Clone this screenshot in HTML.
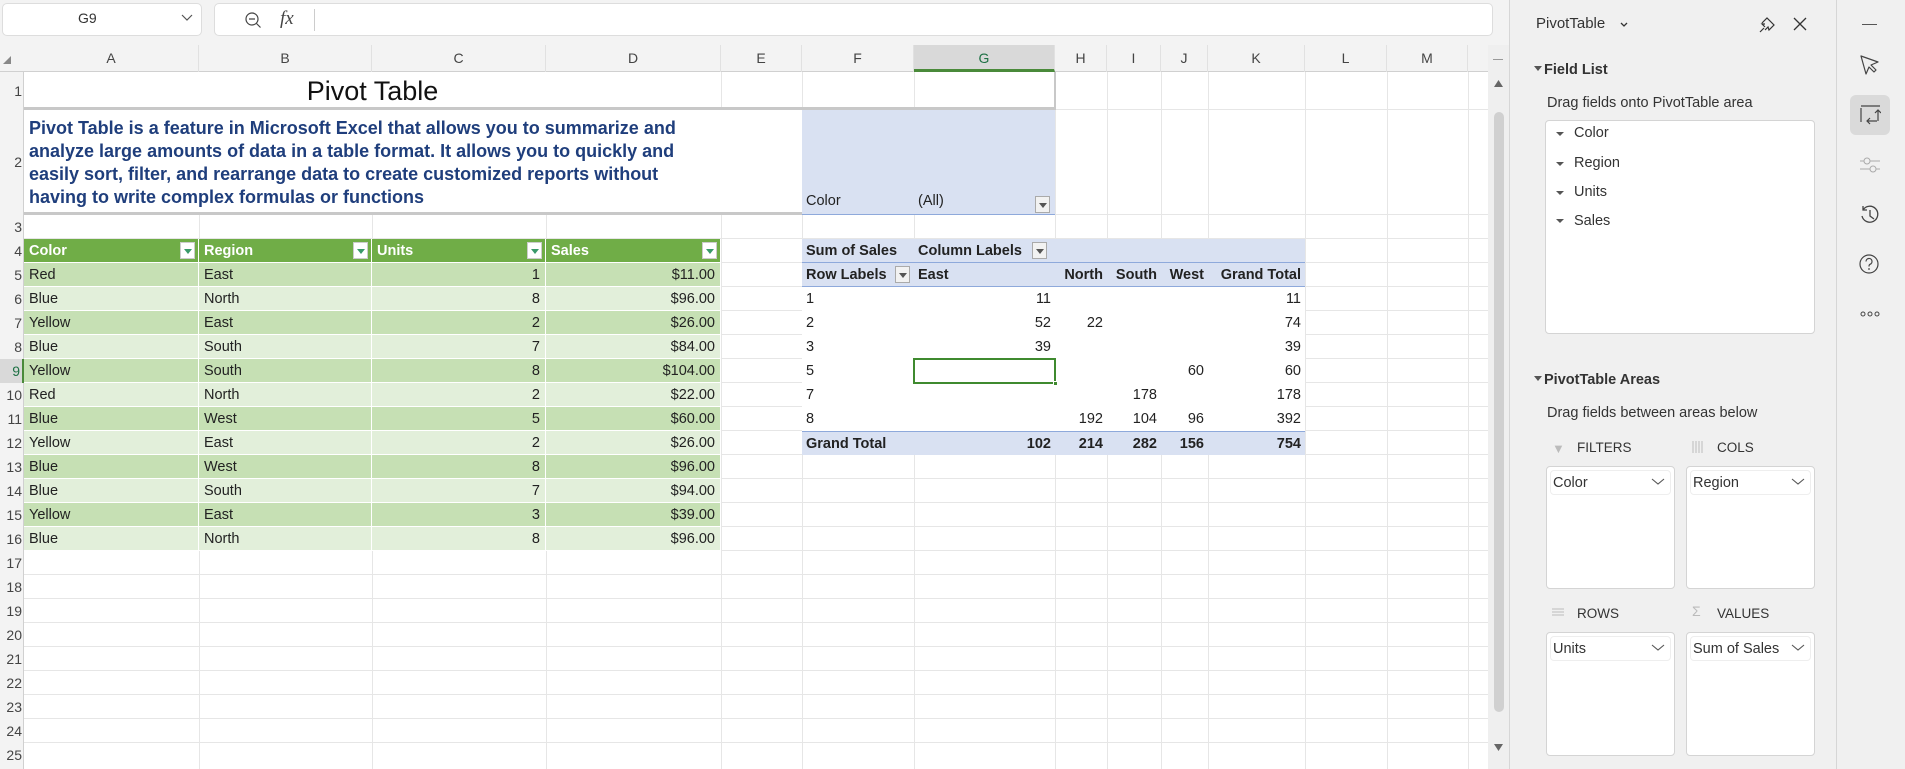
<!DOCTYPE html>
<html><head><meta charset="utf-8"><style>
*{box-sizing:border-box;margin:0;padding:0}
body{width:1905px;height:769px;overflow:hidden;background:#f3f3f3;position:relative;font-family:"Liberation Sans",sans-serif;color:#222}
.a{position:absolute}
.n{font-family:"Liberation Sans Narrow","Liberation Sans",sans-serif;font-size:14.5px}
.vl{position:absolute;top:72px;width:1px;height:697px;background:#e6e6e6}
.hl{position:absolute;left:24px;width:1464px;height:1px;background:#e6e6e6}
.ch{position:absolute;top:45px;height:27px;line-height:27px;text-align:center;font-size:14px;color:#444;border-right:1px solid #e1e1e1}
.rh{position:absolute;left:0;width:22px;height:24px;line-height:24px;text-align:right;font-size:14px;color:#444}
.tr{position:absolute;left:24px;display:flex;height:24px}
.tr div{height:24px;line-height:24px;padding:0 5px;border-right:1px solid #fff;border-bottom:1px solid #fff;white-space:nowrap;position:relative}
.r{text-align:right}
.dk{background:#c6e0b4}.lt{background:#e2efda}
.hd div{background:#70ad47;color:#fff;font-weight:bold}
.dd{position:absolute;right:3px;top:3px;width:15px;height:17px;background:#fff;border:1px solid #ccc}
.dd:after{content:"";position:absolute;left:3px;top:6px;border-left:4px solid transparent;border-right:4px solid transparent;border-top:5px solid #3a9a6a}
.gd:after{border-top-color:#555}
.pr{position:absolute;left:802px;display:flex;height:24px}
.pr div{height:24px;line-height:24px;padding:0 4px;white-space:nowrap;position:relative}
.b{font-weight:bold}
.pan{font-size:14.5px;color:#333}
</style></head><body>
<div class="a" style="left:2px;top:3px;width:200px;height:33px;background:#fff;border:1px solid #ddd;border-radius:5px"></div>
<div class="a" style="left:78px;top:10px;font-size:14px;color:#333">G9</div>
<svg class="a" style="left:181px;top:13px" width="12" height="10"><path d="M1 2l5 5 5-5" fill="none" stroke="#555" stroke-width="1.2"/></svg>
<div class="a" style="left:214px;top:3px;width:1279px;height:33px;background:#fff;border:1px solid #ddd;border-radius:5px"></div>
<svg class="a" style="left:244px;top:11px" width="18" height="18"><circle cx="8" cy="8" r="6" fill="none" stroke="#444" stroke-width="1.2"/><path d="M5 8h6M12.5 12.5l4 4" stroke="#444" stroke-width="1.2"/></svg>
<div class="a" style="left:280px;top:8px;font-family:'Liberation Serif',serif;font-style:italic;font-size:19px;color:#444">fx</div>
<div class="a" style="left:314px;top:9px;width:1px;height:22px;background:#ccc"></div>
<div class="a" style="left:24px;top:72px;width:1464px;height:697px;background:#fff"></div>
<div class="a" style="left:0;top:45px;width:1488px;height:27px;background:#f3f3f3;border-bottom:1px solid #d0d0d0"></div>
<div class="a" style="left:0;top:72px;width:24px;height:697px;background:#f3f3f3;border-right:1px solid #d0d0d0"></div>
<svg class="a" style="left:3px;top:56px" width="8" height="8"><path d="M8 0V8H0Z" fill="#888"/></svg>
<div class="ch" style="left:24px;width:175px">A</div>
<div class="ch" style="left:199px;width:173px">B</div>
<div class="ch" style="left:372px;width:174px">C</div>
<div class="ch" style="left:546px;width:175px">D</div>
<div class="ch" style="left:721px;width:81px">E</div>
<div class="ch" style="left:802px;width:112px">F</div>
<div class="ch" style="left:914px;width:141px;background:#d9d9d9;color:#1e7145;border-bottom:3px solid #4a8a3a">G</div>
<div class="ch" style="left:1055px;width:52px">H</div>
<div class="ch" style="left:1107px;width:54px">I</div>
<div class="ch" style="left:1161px;width:47px">J</div>
<div class="ch" style="left:1208px;width:97px">K</div>
<div class="ch" style="left:1305px;width:82px">L</div>
<div class="ch" style="left:1387px;width:81px">M</div>
<div class="vl" style="left:199px"></div><div class="vl" style="left:372px"></div><div class="vl" style="left:546px"></div><div class="vl" style="left:721px"></div><div class="vl" style="left:802px"></div><div class="vl" style="left:914px"></div><div class="vl" style="left:1055px"></div><div class="vl" style="left:1107px"></div><div class="vl" style="left:1161px"></div><div class="vl" style="left:1208px"></div><div class="vl" style="left:1305px"></div><div class="vl" style="left:1387px"></div><div class="vl" style="left:1468px"></div>
<div class="hl" style="top:109px"></div><div class="hl" style="top:214px"></div><div class="hl" style="top:238px"></div>
<div class="hl" style="top:262px"></div><div class="hl" style="top:286px"></div><div class="hl" style="top:310px"></div><div class="hl" style="top:334px"></div><div class="hl" style="top:358px"></div><div class="hl" style="top:382px"></div><div class="hl" style="top:406px"></div><div class="hl" style="top:430px"></div><div class="hl" style="top:454px"></div><div class="hl" style="top:478px"></div><div class="hl" style="top:502px"></div><div class="hl" style="top:526px"></div><div class="hl" style="top:550px"></div><div class="hl" style="top:574px"></div><div class="hl" style="top:598px"></div><div class="hl" style="top:622px"></div><div class="hl" style="top:646px"></div><div class="hl" style="top:670px"></div><div class="hl" style="top:694px"></div><div class="hl" style="top:718px"></div><div class="hl" style="top:742px"></div>
<div class="a" style="left:24px;top:72px;width:697px;height:38px;background:#fff;border-bottom:3px solid #c8c8c8;text-align:center;font-size:27px;line-height:38px;color:#111">Pivot Table</div>
<div class="a" style="left:721px;top:72px;width:334px;height:38px;border-bottom:3px solid #c8c8c8"></div>
<div class="a" style="left:914px;top:72px;width:142px;height:38px;border-right:2px solid #c8c8c8"></div>
<div class="a" style="left:24px;top:110px;width:778px;height:105px;background:#fff;border-bottom:3px solid #c8c8c8;padding:7px 5px;font-size:18px;font-weight:bold;line-height:23px;color:#1f3e7c;white-space:nowrap">Pivot Table is a feature in Microsoft Excel that allows you to summarize and<br>analyze large amounts of data in a table format. It allows you to quickly and<br>easily sort, filter, and rearrange data to create customized reports without<br>having to write complex formulas or functions</div>
<div class="a" style="left:802px;top:110px;width:253px;height:105px;background:#d9e1f2;border-bottom:1px solid #8ea9db"></div>
<div class="a n" style="left:806px;top:193px">Color</div>
<div class="a n" style="left:918px;top:193px">(All)</div>
<div class="dd gd" style="left:1035px;top:196px;right:auto;width:15px;height:17px;background:#f2f2f2;border-color:#aaa"></div>
<div class="rh" style="top:79px">1</div><div class="rh" style="top:150px">2</div><div class="rh" style="top:215px">3</div>
<div class="rh" style="top:239px">4</div><div class="rh" style="top:263px">5</div><div class="rh" style="top:287px">6</div><div class="rh" style="top:311px">7</div><div class="rh" style="top:335px">8</div><div class="rh" style="top:359px;background:#d9d9d9;color:#1e7145;width:24px;border-right:2px solid #4a8a3a;padding-right:2px">9</div><div class="rh" style="top:383px">10</div><div class="rh" style="top:407px">11</div><div class="rh" style="top:431px">12</div><div class="rh" style="top:455px">13</div><div class="rh" style="top:479px">14</div><div class="rh" style="top:503px">15</div><div class="rh" style="top:527px">16</div><div class="rh" style="top:551px">17</div><div class="rh" style="top:575px">18</div><div class="rh" style="top:599px">19</div><div class="rh" style="top:623px">20</div><div class="rh" style="top:647px">21</div><div class="rh" style="top:671px">22</div><div class="rh" style="top:695px">23</div><div class="rh" style="top:719px">24</div><div class="rh" style="top:743px">25</div>
<div class="tr hd n" style="top:239px"><div style="width:175px">Color<span class="dd"></span></div><div style="width:173px">Region<span class="dd"></span></div><div style="width:174px">Units<span class="dd"></span></div><div style="width:175px">Sales<span class="dd"></span></div></div>
<div class="tr n dk" style="top:263px"><div style="width:175px">Red</div><div style="width:173px">East</div><div class="r" style="width:174px">1</div><div class="r" style="width:175px">$11.00</div></div>
<div class="tr n lt" style="top:287px"><div style="width:175px">Blue</div><div style="width:173px">North</div><div class="r" style="width:174px">8</div><div class="r" style="width:175px">$96.00</div></div>
<div class="tr n dk" style="top:311px"><div style="width:175px">Yellow</div><div style="width:173px">East</div><div class="r" style="width:174px">2</div><div class="r" style="width:175px">$26.00</div></div>
<div class="tr n lt" style="top:335px"><div style="width:175px">Blue</div><div style="width:173px">South</div><div class="r" style="width:174px">7</div><div class="r" style="width:175px">$84.00</div></div>
<div class="tr n dk" style="top:359px"><div style="width:175px">Yellow</div><div style="width:173px">South</div><div class="r" style="width:174px">8</div><div class="r" style="width:175px">$104.00</div></div>
<div class="tr n lt" style="top:383px"><div style="width:175px">Red</div><div style="width:173px">North</div><div class="r" style="width:174px">2</div><div class="r" style="width:175px">$22.00</div></div>
<div class="tr n dk" style="top:407px"><div style="width:175px">Blue</div><div style="width:173px">West</div><div class="r" style="width:174px">5</div><div class="r" style="width:175px">$60.00</div></div>
<div class="tr n lt" style="top:431px"><div style="width:175px">Yellow</div><div style="width:173px">East</div><div class="r" style="width:174px">2</div><div class="r" style="width:175px">$26.00</div></div>
<div class="tr n dk" style="top:455px"><div style="width:175px">Blue</div><div style="width:173px">West</div><div class="r" style="width:174px">8</div><div class="r" style="width:175px">$96.00</div></div>
<div class="tr n lt" style="top:479px"><div style="width:175px">Blue</div><div style="width:173px">South</div><div class="r" style="width:174px">7</div><div class="r" style="width:175px">$94.00</div></div>
<div class="tr n dk" style="top:503px"><div style="width:175px">Yellow</div><div style="width:173px">East</div><div class="r" style="width:174px">3</div><div class="r" style="width:175px">$39.00</div></div>
<div class="tr n lt" style="top:527px"><div style="width:175px">Blue</div><div style="width:173px">North</div><div class="r" style="width:174px">8</div><div class="r" style="width:175px">$96.00</div></div>
<div class="pr n b" style="top:239px;background:#d9e1f2;width:503px;border-bottom:1px solid #8ea9db"><div style="width:112px">Sum of Sales</div><div style="width:141px">Column Labels<span class="dd gd" style="right:auto;left:118px;background:#f2f2f2;border-color:#aaa"></span></div></div>
<div class="pr n b" style="top:263px;background:#d9e1f2;width:503px;border-bottom:1px solid #8ea9db"><div style="width:112px">Row Labels<span class="dd gd" style="right:4px;background:#f2f2f2;border-color:#aaa"></span></div><div style="width:141px">East</div><div class="r" style="width:52px">North</div><div class="r" style="width:54px">South</div><div class="r" style="width:47px">West</div><div class="r" style="width:97px">Grand Total</div></div>
<div class="pr n" style="top:287px;background:#fff;width:503px"><div style="width:112px">1</div><div class="r" style="width:141px">11</div><div style="width:52px"></div><div style="width:54px"></div><div style="width:47px"></div><div class="r" style="width:97px">11</div></div>
<div class="pr n" style="top:311px;background:#fff;width:503px"><div style="width:112px">2</div><div class="r" style="width:141px">52</div><div class="r" style="width:52px">22</div><div style="width:54px"></div><div style="width:47px"></div><div class="r" style="width:97px">74</div></div>
<div class="pr n" style="top:335px;background:#fff;width:503px"><div style="width:112px">3</div><div class="r" style="width:141px">39</div><div style="width:52px"></div><div style="width:54px"></div><div style="width:47px"></div><div class="r" style="width:97px">39</div></div>
<div class="pr n" style="top:359px;background:#fff;width:503px"><div style="width:112px">5</div><div style="width:141px"></div><div style="width:52px"></div><div style="width:54px"></div><div class="r" style="width:47px">60</div><div class="r" style="width:97px">60</div></div>
<div class="pr n" style="top:383px;background:#fff;width:503px"><div style="width:112px">7</div><div style="width:141px"></div><div style="width:52px"></div><div class="r" style="width:54px">178</div><div style="width:47px"></div><div class="r" style="width:97px">178</div></div>
<div class="pr n" style="top:407px;background:#fff;width:503px"><div style="width:112px">8</div><div style="width:141px"></div><div class="r" style="width:52px">192</div><div class="r" style="width:54px">104</div><div class="r" style="width:47px">96</div><div class="r" style="width:97px">392</div></div>
<div class="pr n b" style="top:431px;background:#d9e1f2;width:503px;border-top:1px solid #8ea9db"><div style="width:112px">Grand Total</div><div class="r" style="width:141px">102</div><div class="r" style="width:52px">214</div><div class="r" style="width:54px">282</div><div class="r" style="width:47px">156</div><div class="r" style="width:97px">754</div></div>
<div class="a" style="left:913px;top:358px;width:143px;height:26px;border:2px solid #3f8a2f"></div>
<div class="a" style="left:1053px;top:381px;width:5px;height:5px;background:#3f8a2f;border:1px solid #fff"></div>
<div class="a" style="left:1488px;top:45px;width:21px;height:724px;background:#efefef"></div>
<div class="a" style="left:1493px;top:59px;width:10px;height:1px;background:#999"></div>
<svg class="a" style="left:1494px;top:80px" width="9" height="7"><path d="M0 7L4.5 0 9 7Z" fill="#666"/></svg>
<div class="a" style="left:1494px;top:112px;width:10px;height:600px;background:#d0d0d0;border-radius:5px"></div>
<svg class="a" style="left:1494px;top:744px" width="9" height="7"><path d="M0 0L4.5 7 9 0Z" fill="#666"/></svg>
<div class="a" style="left:1509px;top:0;width:327px;height:769px;background:#f0f0f0;border-left:1px solid #d6d6d6"></div>
<div class="a" style="left:1836px;top:0;width:69px;height:769px;background:#f0f0f0;border-left:1px solid #d6d6d6"></div>
<div class="a pan" style="left:1536px;top:15px;font-size:15px">PivotTable</div>
<svg class="a" style="left:1620px;top:22px" width="8" height="6"><path d="M1 1l3 3 3-3" fill="none" stroke="#333" stroke-width="1.3"/></svg>
<svg class="a" style="left:1758px;top:16px" width="18" height="18"><path d="M4 7l5-5 7 7-5 5-1-3-3 3M7 8l-3 0 3 3" fill="none" stroke="#333" stroke-width="1.2"/><path d="M6 12l-4 4" stroke="#333" stroke-width="1.2"/></svg>
<svg class="a" style="left:1793px;top:17px" width="14" height="14"><path d="M1 1l12 12M13 1L1 13" stroke="#333" stroke-width="1.3"/></svg>
<svg class="a" style="left:1534px;top:66px" width="8" height="6"><path d="M0 0h8L4 5Z" fill="#555"/></svg>
<div class="a pan b" style="left:1544px;top:62px">Field List</div>
<div class="a pan" style="left:1547px;top:95px">Drag fields onto PivotTable area</div>
<div class="a" style="left:1545px;top:120px;width:270px;height:214px;background:#fff;border:1px solid #d4d4d4;border-radius:4px"></div>
<svg class="a" style="left:1555px;top:131px" width="10" height="70"><path d="M1 1h8L5 5ZM1 31h8L5 35ZM1 60h8L5 64Z" fill="#555"/></svg>
<svg class="a" style="left:1555px;top:218px" width="10" height="6"><path d="M1 1h8L5 5Z" fill="#555"/></svg>
<div class="a pan" style="left:1574px;top:125px">Color</div>
<div class="a pan" style="left:1574px;top:155px">Region</div>
<div class="a pan" style="left:1574px;top:184px">Units</div>
<div class="a pan" style="left:1574px;top:213px">Sales</div>
<svg class="a" style="left:1534px;top:376px" width="8" height="6"><path d="M0 0h8L4 5Z" fill="#555"/></svg>
<div class="a pan b" style="left:1544px;top:372px">PivotTable Areas</div>
<div class="a pan" style="left:1547px;top:405px">Drag fields between areas below</div>
<div class="a" style="left:1552px;top:441px;width:12px;height:14px;color:#bbb;font-size:13px">&#x25BC;</div>
<div class="a pan" style="left:1577px;top:440px;font-size:13.5px">FILTERS</div>
<svg class="a" style="left:1692px;top:441px" width="12" height="12"><path d="M1 0v12M4 0v12M7 0v12M10 0v12" stroke="#bbb"/></svg>
<div class="a pan" style="left:1717px;top:440px;font-size:13.5px">COLS</div>
<svg class="a" style="left:1552px;top:608px" width="12" height="10"><path d="M0 1h12M0 4h12M0 7h12" stroke="#bbb"/></svg>
<div class="a pan" style="left:1577px;top:606px;font-size:13.5px">ROWS</div>
<div class="a" style="left:1692px;top:603px;color:#bbb;font-size:14px">Σ</div>
<div class="a pan" style="left:1717px;top:606px;font-size:13.5px">VALUES</div>
<div class="a" style="left:1546px;top:466px;width:129px;height:123px;background:#fff;border:1px solid #d4d4d4;border-radius:4px"></div>
<div class="a" style="left:1686px;top:466px;width:129px;height:123px;background:#fff;border:1px solid #d4d4d4;border-radius:4px"></div>
<div class="a" style="left:1546px;top:632px;width:129px;height:124px;background:#fff;border:1px solid #d4d4d4;border-radius:4px"></div>
<div class="a" style="left:1686px;top:632px;width:129px;height:124px;background:#fff;border:1px solid #d4d4d4;border-radius:4px"></div>
<div class="a pan" style="left:1550px;top:470px;width:121px;height:25px;border:1px solid #eee;border-radius:4px;padding:4px 2px">Color</div>
<div class="a pan" style="left:1690px;top:470px;width:121px;height:25px;border:1px solid #eee;border-radius:4px;padding:4px 2px">Region</div>
<div class="a pan" style="left:1550px;top:636px;width:121px;height:25px;border:1px solid #eee;border-radius:4px;padding:4px 2px">Units</div>
<div class="a pan" style="left:1690px;top:636px;width:121px;height:25px;border:1px solid #eee;border-radius:4px;padding:4px 2px">Sum of Sales</div>
<svg class="a" style="left:1651px;top:478px" width="14" height="8"><path d="M1 1l6 5 6-5" fill="none" stroke="#555" stroke-width="1.1"/></svg>
<svg class="a" style="left:1791px;top:478px" width="14" height="8"><path d="M1 1l6 5 6-5" fill="none" stroke="#555" stroke-width="1.1"/></svg>
<svg class="a" style="left:1651px;top:644px" width="14" height="8"><path d="M1 1l6 5 6-5" fill="none" stroke="#555" stroke-width="1.1"/></svg>
<svg class="a" style="left:1791px;top:644px" width="14" height="8"><path d="M1 1l6 5 6-5" fill="none" stroke="#555" stroke-width="1.1"/></svg>
<div class="a" style="left:1862px;top:24px;width:15px;height:1px;background:#555"></div>
<svg class="a" style="left:1860px;top:55px" width="20" height="20"><path d="M1 1l17 6-7 3 5 5-2 2-5-5-3 7Z" fill="none" stroke="#444" stroke-width="1.2" stroke-linejoin="round"/></svg>
<div class="a" style="left:1850px;top:95px;width:40px;height:40px;background:#dadada;border-radius:6px"></div>
<svg class="a" style="left:1860px;top:104px" width="21" height="21"><path d="M1 2h19M1 4v14M18 17V6M15 9l3-3 3 3M17 17H7M10 14l-3 3 3 3" fill="none" stroke="#444" stroke-width="1.2"/></svg>
<svg class="a" style="left:1859px;top:155px" width="22" height="20"><path d="M1 6h20M1 14h20" stroke="#aaa"/><circle cx="8" cy="6" r="3" fill="#f0f0f0" stroke="#aaa"/><circle cx="14" cy="14" r="3" fill="#f0f0f0" stroke="#aaa"/></svg>
<svg class="a" style="left:1859px;top:204px" width="22" height="22"><path d="M4 6A8 8 0 1 1 3 12M4 2v4h4M11 6v6l4 3" fill="none" stroke="#444" stroke-width="1.3"/></svg>
<svg class="a" style="left:1858px;top:253px" width="22" height="22"><circle cx="11" cy="11" r="9" fill="none" stroke="#444" stroke-width="1.2"/><path d="M8 8.5a3 3 0 1 1 4 2.8c-1 .4-1 1-1 2.2" fill="none" stroke="#444" stroke-width="1.2"/><circle cx="11" cy="16" r=".9" fill="#444"/></svg>
<svg class="a" style="left:1860px;top:311px" width="20" height="6"><circle cx="3" cy="3" r="2" fill="none" stroke="#444"/><circle cx="10" cy="3" r="2" fill="none" stroke="#444"/><circle cx="17" cy="3" r="2" fill="none" stroke="#444"/></svg>
</body></html>
